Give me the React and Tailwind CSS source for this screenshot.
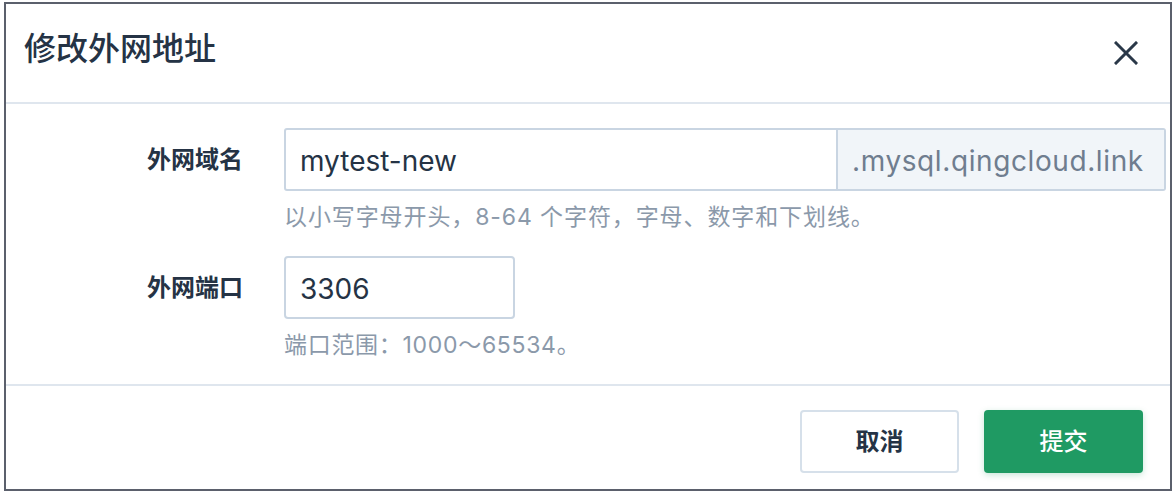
export default function App() {
  const font = { fontFamily: '"Inter", "Noto Sans CJK SC", sans-serif' };
  return (
    <div className="w-[1176px] h-[492px] bg-white pt-[2px] pl-[4px] pr-[4px] pb-[1px]" style={font}>
      <div className="h-[489px] border-2 border-[#5b606c] flex flex-col bg-white">
        <div className="h-[100px] flex items-start justify-between pl-[18px] pr-[32px] border-b-2 border-[#dfe6ee] shrink-0">
          <div className="mt-[24px] text-[32px] leading-[42px] font-medium text-[#253345]">修改外网地址</div>
          <svg className="mt-[37px]" width="24" height="24" viewBox="0 0 24 24">
            <path d="M2 2 L22 22 M22 2 L2 22" stroke="#2a3848" strokeWidth="3" strokeLinecap="square" />
          </svg>
        </div>
        <div className="h-[282px] shrink-0 border-b-2 border-[#dfe6ee] pt-[24px] pr-[4px]">
          <div className="flex">
            <div className="w-[237px] shrink-0 text-right text-[24px] font-semibold text-[#253345] h-[63px] leading-[63px]">外网域名</div>
            <div className="ml-[41px] flex-1">
              <div className="flex h-[63px] border-2 border-[#c9d5e2] rounded-[3px]">
                <div className="flex-1 pl-[14px] pt-[3px] text-[28px] leading-[56px] text-[#253345]">mytest-new</div>
                <div className="w-[328px] border-l-2 border-[#c9d5e2] bg-[#f1f5f9] pl-[14px] pt-[3px] text-[28px] leading-[56px] tracking-[0.6px] text-[#6f7d8f]">.mysql.qingcloud.link</div>
              </div>
              <div className="mt-[12px] text-[23px] leading-[28px] tracking-[0.9px] text-[#8b99aa]">以小写字母开头，8-64 个字符，字母、数字和下划线。</div>
            </div>
          </div>
          <div className="flex mt-[25px]">
            <div className="w-[237px] shrink-0 text-right text-[24px] font-semibold text-[#253345] h-[63px] leading-[63px]">外网端口</div>
            <div className="ml-[41px] flex-1">
              <div className="w-[231px] h-[63px] border-2 border-[#c9d5e2] rounded-[4px] pl-[14px] pt-[3px] text-[28px] leading-[56px] text-[#253345]">3306</div>
              <div className="mt-[12px] text-[23px] leading-[28px] tracking-[0.7px] text-[#8b99aa]">端口范围：1000～65534。</div>
            </div>
          </div>
        </div>
        <div className="flex-1 flex justify-end items-start pt-[24px] pr-[27px] gap-[25px]">
          <button className="w-[159px] h-[63px] border-2 border-[#d6e0ea] rounded-[4px] bg-white text-[24px] font-semibold text-[#253345]">取消</button>
          <button className="w-[159px] h-[63px] rounded-[4px] bg-[#1f9a63] text-[24px] font-medium text-white shadow-[0_2px_6px_rgba(31,154,99,0.25)]">提交</button>
        </div>
      </div>
    </div>
  );
}
